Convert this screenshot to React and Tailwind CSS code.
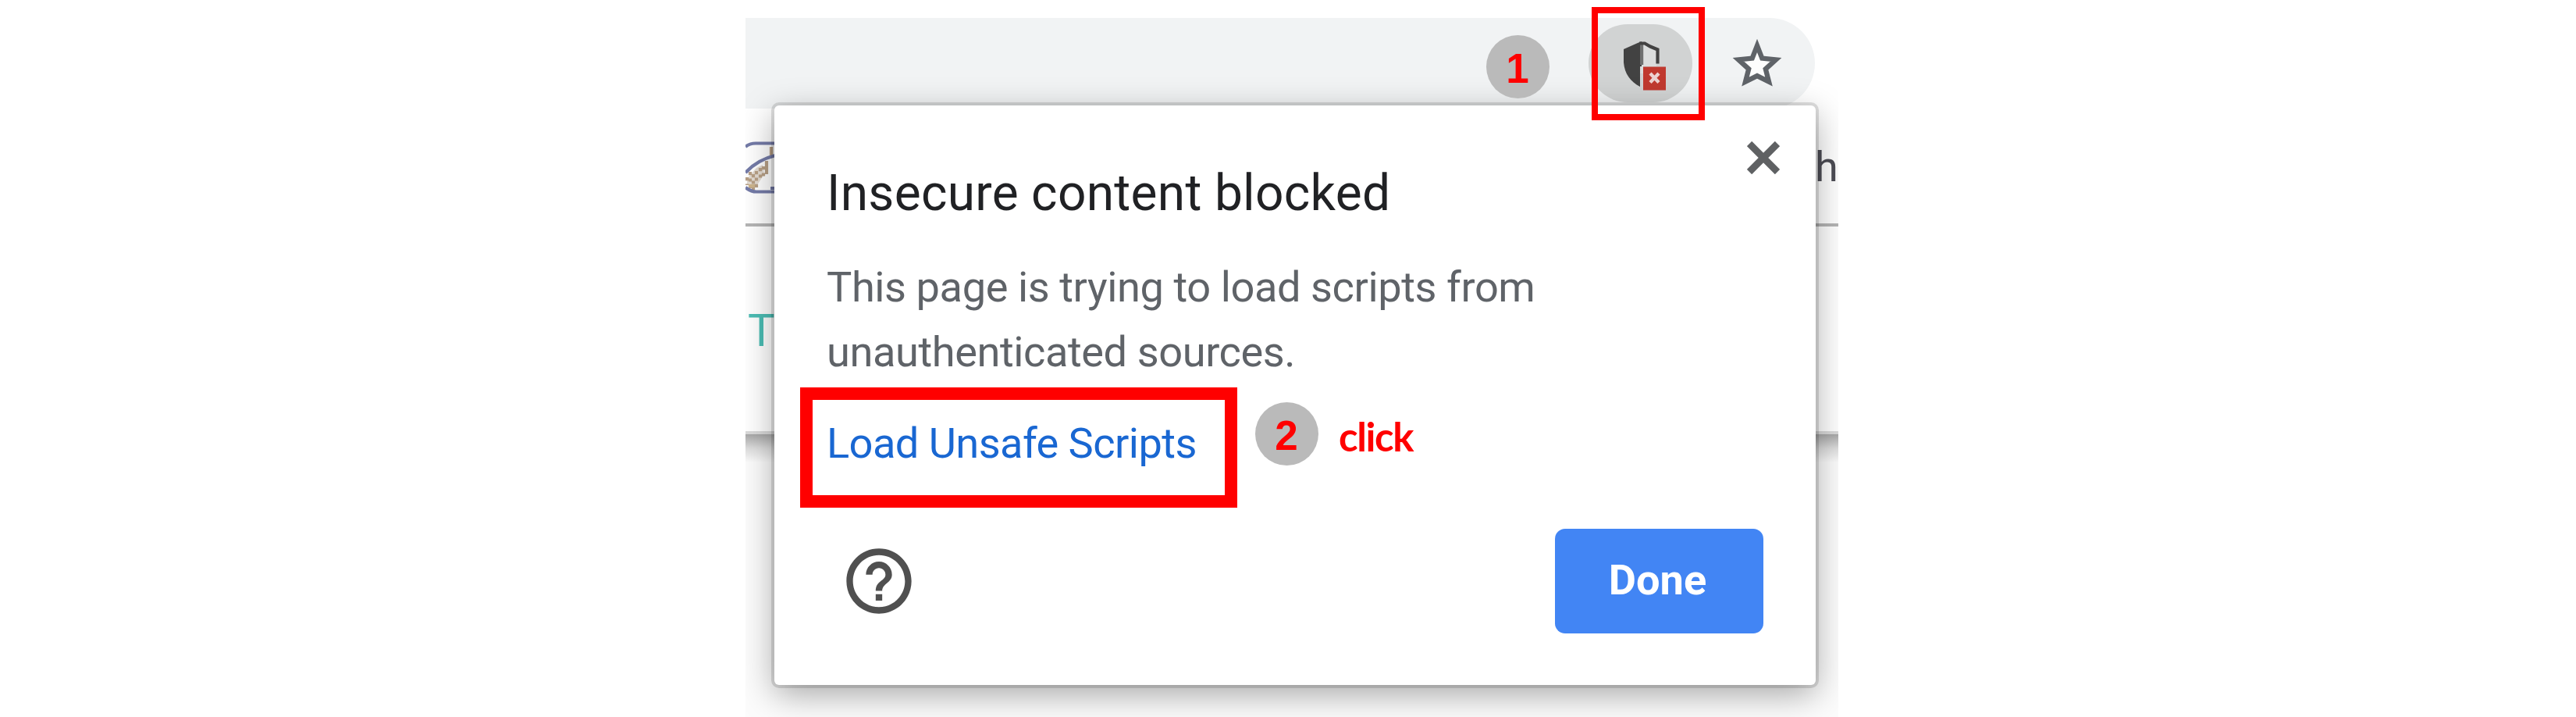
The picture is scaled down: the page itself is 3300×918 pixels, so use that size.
const roboto = "font-['Roboto',sans-serif]";

function Shield() {
  return (
    <svg className="absolute left-[45px] top-[21px] h-[66px] w-[56px]" viewBox="0 0 56 66">
      <path d="M24 4 L42 12 V33 H25 V42 H21 Z" fill="#dbdddd" />
      <path d="M23 1 L18 3 L0 11 V28 C1 42 9 53 21 59 V33 H23 Z" fill="#424242" />
      <rect x="21" y="4" width="4.2" height="27" fill="#6f7070" />
      <path d="M20 3.5 H27 L34 7.5 L43.5 11.5 V29.5" fill="none" stroke="#424242" strokeWidth="4.2" />
      <rect x="25" y="33.5" width="29" height="30" fill="#c0392f" />
      <path d="M34 42 L45 53.5 M45 42 L34 53.5" stroke="#ecd3d1" strokeWidth="4.4" />
    </svg>
  );
}

function Star() {
  return (
    <svg className="h-[72px] w-[72px]" viewBox="0 0 24 24">
      <path
        d="M12 3.8 L14.1 9.2 L20 9.8 L15.6 13.8 L17 19.2 L12 16.7 L7 19.2 L8.4 13.8 L4 9.8 L9.9 9.2 Z"
        fill="#fdfdfd"
        stroke="#5f6368"
        strokeWidth="2.1"
      />
    </svg>
  );
}

function SiteLogo() {
  return (
    <svg className="mt-[42px] h-[68px] w-[38px]" viewBox="0 0 38 68" fill="none">
      <path d="M33 7 V21 M27 25 V42" stroke="#b8a086" strokeWidth="4.2" />
      <path d="M22 30 L24 42 L13 59 L2 55 V48 L14 34 Z" fill="#e4dcd3" />
      <path d="M23 32 V46 M19 34 V50 M14 38 V60 M6 39 V60 M2 46 V56 M10 42 V62" stroke="#b8a086" strokeWidth="4.2" strokeDasharray="4.2 4.2" />
      <path d="M4 57 H12" stroke="#cdb48c" strokeWidth="4.2" />
      <path d="M0 7 Q5 2.5 13 2.5 H38 M0 40 C10 29 22 22 38 18 M0 59 Q7 64.5 14 64.5 H38 M32 60 H38" stroke="#747ba8" strokeWidth="4.2" />
    </svg>
  );
}

function Step({ children }) {
  return (
    <div className="flex h-[81px] w-[81px] items-center justify-center rounded-full bg-[#bababa] font-['Liberation_Sans',sans-serif] text-[53px] leading-none font-bold text-[#ff0000]">
      <span className="mt-[3px] -ml-[1px]">{children}</span>
    </div>
  );
}

export default function App() {
  return (
    <div className="flex h-[918px] w-[3300px] justify-center overflow-hidden bg-white pl-[10px]">
      <div className="relative h-[918px] w-[1400px] overflow-hidden bg-white pt-[23px]">
        <div className="flex h-[116px] w-[1370px] items-start rounded-r-full bg-[#f1f3f4]">
          <div className="relative mt-[8px] ml-[1080px] h-[100px] w-[133px] rounded-[50px] bg-[#d1d3d3]">
            <Shield />
          </div>
          <div className="mt-[24px] ml-[47px]">
            <Star />
          </div>
        </div>
        <div className="flex h-[151px] items-start justify-between border-b-4 border-[#b5b5b5]">
          <SiteLogo />
          <span className={`${roboto} mt-[45px] -mr-[4px] w-[34px] text-[54px] leading-[60px] text-[#4d4d55]`}>h</span>
        </div>
        <div className="h-[262px] pt-[99px] pl-[3px]">
          <div className={`${roboto} text-[58px] leading-[68px] text-[#4bbdb4]`}>T</div>
        </div>
        <div className="h-[4px] bg-[#dadada]" />
        <div className="h-[362px] bg-[#fcfcfc]">
          <div className="h-[36px] bg-linear-to-b from-[#a8a8a8] via-[#dddddd] to-[#fcfcfc]" />
        </div>

        <div className="absolute top-[135px] left-[37px] flex h-[742px] w-[1334px] flex-col rounded-[6px] bg-white pt-[76px] pr-[67px] pl-[67px] shadow-[0_0_0_4px_rgba(0,0,0,0.12),0_12px_44px_rgba(0,0,0,0.34)]">
          <h1 className={`${roboto} h-[74px] text-[64px] leading-[74px] tracking-[0.3px] whitespace-nowrap text-[#202124]`}>Insecure content blocked</h1>
          <p className={`${roboto} mt-[41px] text-[54.2px] leading-[83.3px] tracking-[-0.43px] whitespace-nowrap text-[#5f6368]`}>
            This page is trying to load scripts from
            <br />
            unauthenticated sources.
          </p>
          <a className={`${roboto} mt-[33px] text-[54.2px] leading-[84px] tracking-[-0.57px] whitespace-nowrap text-[#1967d2]`}>Load Unsafe Scripts</a>
          <div className="mt-[67px] flex items-start justify-between">
            <svg className="mt-[17px] ml-[17px] h-[100px] w-[100px]" viewBox="0 0 24 24" fill="#505050">
              <path d="M11 18h2v-2h-2v2zm1-16C6.48 2 2 6.48 2 12s4.48 10 10 10 10-4.48 10-10S17.52 2 12 2zm0 18c-4.41 0-8-3.59-8-8s3.59-8 8-8 8 3.59 8 8-3.59 8-8 8zm0-14c-2.21 0-4 1.79-4 4h2c0-1.1.9-2 2-2s2 .9 2 2c0 2-3 1.75-3 5h2c0-2.25 3-2.5 3-5 0-2.21-1.79-4-4-4z" />
            </svg>
            <button className={`${roboto} h-[134px] w-[267px] rounded-[13px] bg-[#4285f4] pr-[4px] pb-[1px] text-[54.2px] leading-none font-bold text-white`}>Done</button>
          </div>
          <svg className="absolute top-[46px] left-[1246px] h-[42px] w-[42px]" viewBox="0 0 42 42">
            <path d="M3 3 L39 39 M39 3 L3 39" stroke="#5f6163" strokeWidth="9" />
          </svg>
        </div>

        <div className="absolute top-[9px] left-[1084px] h-[145px] w-[145px] border-8 border-[#ff0000]" />
        <div className="absolute top-[496px] left-[70px] h-[154px] w-[560px] border-16 border-[#ff0000]" />
        <div className="absolute top-[45px] left-[949px]"><Step>1</Step></div>
        <div className="absolute top-[515px] left-[653px] flex items-center">
          <Step>2</Step>
          <span className="mt-[6px] ml-[26px] font-['Lato',sans-serif] text-[51px] leading-none font-bold tracking-[-1.4px] text-[#ff0000]">click</span>
        </div>
      </div>
    </div>
  );
}
